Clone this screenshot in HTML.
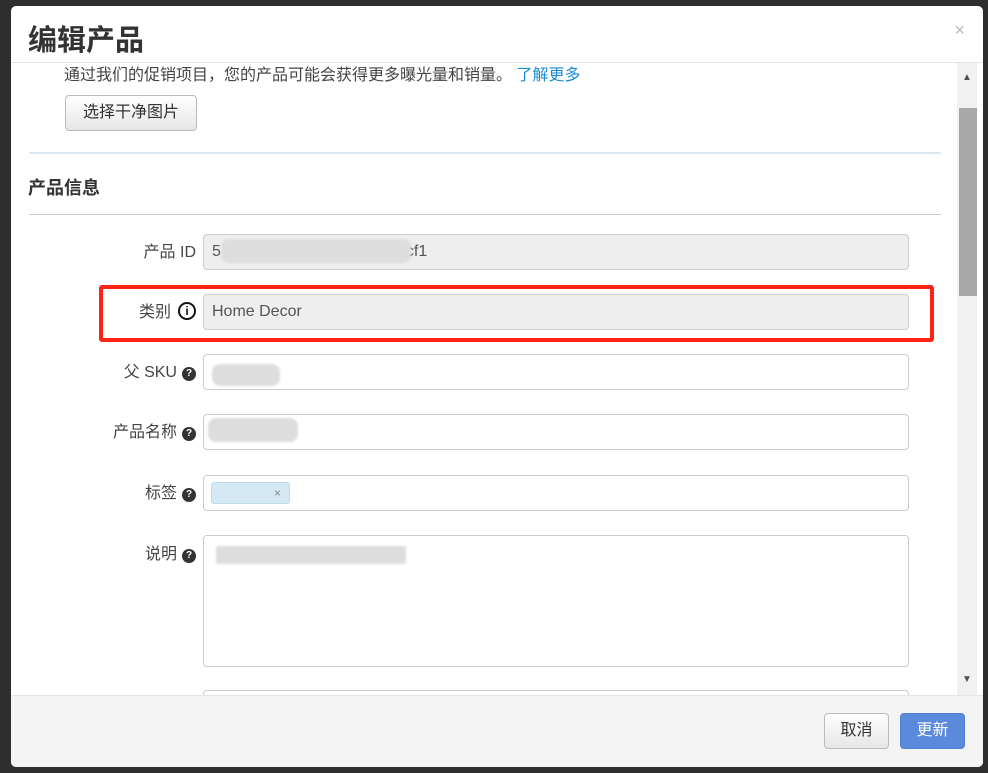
<!DOCTYPE html>
<html><head><meta charset="utf-8"><style>
*{box-sizing:border-box;margin:0;padding:0}
body{width:988px;height:773px;background:#2e2e2e;font-family:"Liberation Sans","Noto Sans CJK SC",sans-serif;position:relative;overflow:hidden;color:#333}
.modal{position:absolute;left:11px;top:6px;width:972px;height:761px;background:#fff;border-radius:5px;overflow:hidden}
.hdr{position:absolute;left:0;top:0;width:100%;height:57px;border-bottom:1px solid #e5e5e5}
.hdr h1{position:absolute;left:17px;top:11px;font-size:29px;font-weight:bold;color:#333}
.close{position:absolute;right:18px;top:14px;font-size:18px;color:#bbb}
.a{position:absolute}
.lbl{position:absolute;text-align:right;width:170px;font-size:16px;color:#444;line-height:20px;height:20px}
.q{display:inline-block;width:14px;height:14px;border-radius:50%;background:#333;color:#fff;font-size:10px;line-height:14px;text-align:center;font-weight:bold;vertical-align:1px;margin-left:5px}
.inp{position:absolute;left:192px;width:706px;height:36px;border:1px solid #ccc;border-radius:4px;background:#fff;font-size:16px;color:#555;padding:8px}
.ro{background:#eee}
.blur{position:absolute;background:#ddd;border-radius:8px;filter:blur(1px)}
.foot{position:absolute;left:0;top:689px;width:100%;height:72px;background:#f4f4f4;border-top:1px solid #e5e5e5}
.btn{position:absolute;height:36px;border-radius:4px;font-size:16px;text-align:center;line-height:34px}
</style></head><body>
<div class="modal">
<div class="hdr"><h1>编辑产品</h1><div class="close">×</div></div>
<div class="a" style="left:53px;top:55px;font-size:16px;color:#444">通过我们的促销项目，您的产品可能会获得更多曝光量和销量。 <span style="color:#1a8ad6">了解更多</span></div>
<div class="btn" style="left:54px;top:89px;width:132px;height:36px;border:1px solid #bbb;background:linear-gradient(#fff,#e6e6e6);color:#333">选择干净图片</div>
<div class="a" style="left:18px;top:146px;width:912px;height:2px;background:#dbe6ee;border-radius:2px"></div>
<div class="a" style="left:17px;top:168px;font-size:18px;font-weight:bold;color:#333">产品信息</div>
<div class="a" style="left:18px;top:208px;width:912px;height:1px;background:#ccc"></div>

<div class="lbl" style="left:15px;top:237px">产品 ID</div>
<div class="inp ro" style="top:228px">5<span style="display:inline-block;width:185px"></span>cf1</div>
<div class="blur" style="left:210px;top:233px;width:190px;height:24px"></div>

<div class="a" style="left:88px;top:279px;width:835px;height:57px;border:4px solid #ff2217;border-radius:3px"></div>
<div class="lbl" style="left:-10px;top:297px">类别</div>
<div class="a" style="left:167px;top:296px;width:18px;height:18px;border:2px solid #111;border-radius:50%;font-size:12px;line-height:14px;text-align:center;font-weight:bold;color:#111">i</div>
<div class="inp ro" style="top:288px">Home Decor</div>

<div class="lbl" style="left:15px;top:357px">父 SKU<span class="q">?</span></div>
<div class="inp" style="top:348px"></div>
<div class="blur" style="left:201px;top:358px;width:68px;height:22px"></div>

<div class="lbl" style="left:15px;top:417px">产品名称<span class="q">?</span></div>
<div class="inp" style="top:408px"></div>
<div class="blur" style="left:197px;top:412px;width:90px;height:24px"></div>

<div class="lbl" style="left:15px;top:478px">标签<span class="q">?</span></div>
<div class="inp" style="top:469px"></div>
<div class="a" style="left:200px;top:476px;width:79px;height:22px;background:#d4e8f3;border:1px solid #bcdcec;border-radius:3px;font-size:12px;color:#888;padding-left:62px;line-height:20px">×</div>

<div class="lbl" style="left:15px;top:539px">说明<span class="q">?</span></div>
<div class="a" style="left:192px;top:529px;width:706px;height:132px;border:1px solid #ccc;border-radius:4px"></div>
<div class="blur" style="left:205px;top:540px;width:190px;height:18px;border-radius:2px"></div>
<div class="a" style="left:192px;top:684px;width:706px;height:10px;border:1px solid #ccc;border-bottom:none;border-radius:4px 4px 0 0"></div>

<div class="a" style="left:946px;top:57px;width:20px;height:632px;background:#f1f1f1"></div>
<div class="a" style="left:948px;top:102px;width:18px;height:188px;background:#a8a8a8"></div>
<div class="a" style="left:951px;top:66px;font-size:10px;color:#505050">▲</div>
<div class="a" style="left:951px;top:668px;font-size:10px;color:#505050">▼</div>

<div class="foot">
<div class="btn" style="left:813px;top:17px;width:65px;border:1px solid #bbb;background:linear-gradient(#fff,#e6e6e6);color:#333">取消</div>
<div class="btn" style="left:889px;top:17px;width:65px;background:#5b89db;color:#fff;border:1px solid #4f7fd6">更新</div>
</div>
</div>
</body></html>
